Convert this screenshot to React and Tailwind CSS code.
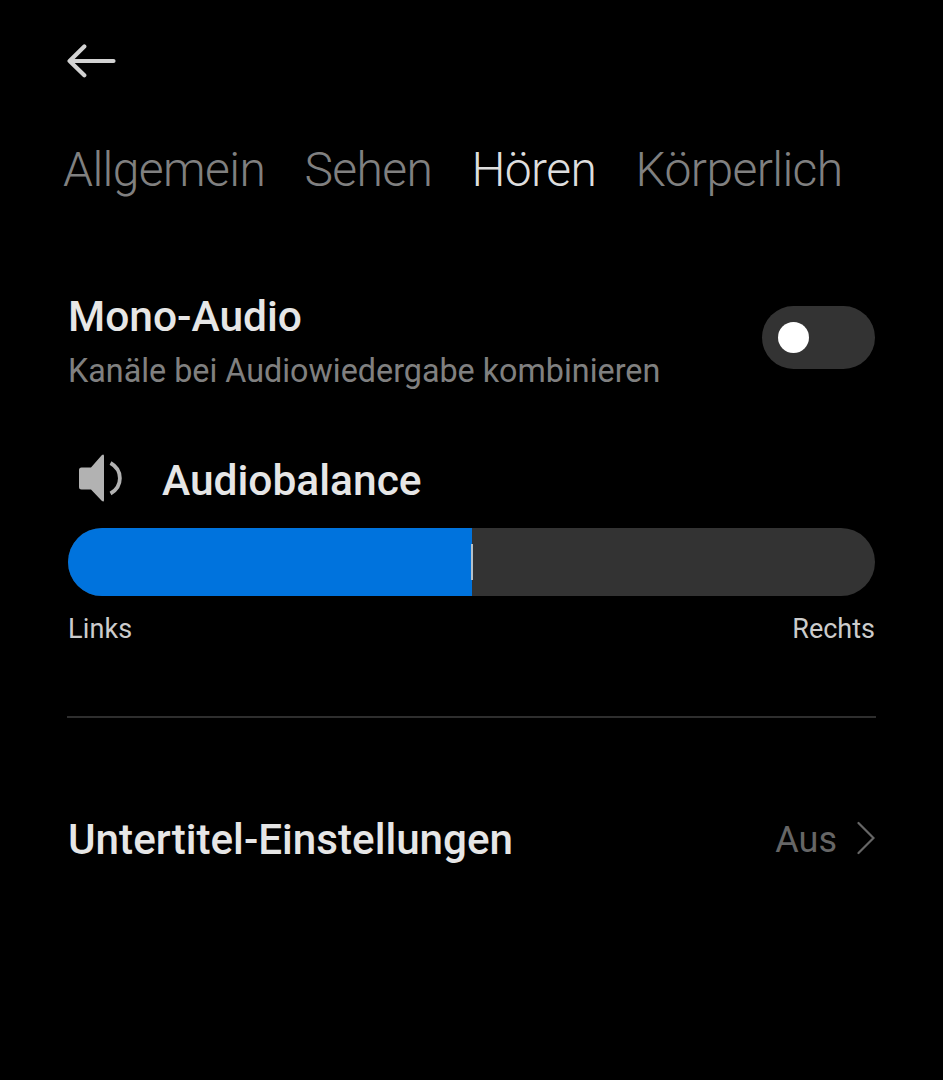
import React, { useState } from 'react';

const tabs = ['Allgemein', 'Sehen', 'Hören', 'Körperlich'];

const BackIcon = () => (
  <svg width="50" height="36" viewBox="0 0 50 36" fill="none" stroke="#d2d2d2" strokeWidth="4.2" strokeLinecap="round" strokeLinejoin="round">
    <path d="M17.3 3.5 2.6 18l14.7 14.3M2.6 18H46.5" />
  </svg>
);

const SpeakerIcon = () => (
  <svg width="44" height="50" viewBox="0 0 44 50" fill="none">
    <path d="M2.5 14.5H12L22.7 2.2q2.3-1.8 2.3.8v44q0 2.6-2.3.8L12 36.5H2.5Q0 36.5 0 34V17q0-2.5 2.5-2.5Z" fill="#b2b2b2" />
    <path d="M31.5 10c12.5 7 12.5 23.5 0 30.5" stroke="#b2b2b2" strokeWidth="3.8" />
  </svg>
);

const ChevronIcon = () => (
  <svg width="18" height="34" viewBox="0 0 18 34" fill="none" stroke="#666666" strokeWidth="2.2" strokeLinecap="round">
    <path d="M1.5 2l15 15-15 15" />
  </svg>
);

const App = () => {
  const [active, setActive] = useState('Hören');
  const [mono, setMono] = useState(false);

  return (
    <main className="h-[1080px] w-[943px] overflow-hidden bg-black px-[68px] pt-[43px] font-['Roboto',sans-serif] text-[#e6e6e6]">
      <button className="-ml-px block h-9"><BackIcon /></button>

      <nav className="-ml-[5px] mt-[63px] flex h-14 gap-[39.2px] whitespace-nowrap text-[48px] leading-[56px] font-light tracking-[-0.6px]">
        {tabs.map((tab) => (
          <button key={tab} onClick={() => setActive(tab)} className={tab === active ? 'text-[#dedede]' : 'text-[#808080]'}>
            {tab}
          </button>
        ))}
      </nav>

      <section className="mt-[92px] flex h-[106px] justify-between">
        <div className="pt-px">
          <h2 className="h-[52px] text-[42.5px] leading-[52px] font-medium">Mono-Audio</h2>
          <p className="mt-[8px] text-[32.3px] leading-[40px] text-[#808080]">Kanäle bei Audiowiedergabe kombinieren</p>
        </div>
        <button
          role="switch"
          aria-checked={mono}
          onClick={() => setMono(!mono)}
          className={`mt-4 flex h-[63px] w-[113px] items-center rounded-full px-4 ${mono ? 'justify-end bg-[#0073dd]' : 'bg-[#333333]'}`}
        >
          <span className="size-[31px] rounded-full bg-white" />
        </button>
      </section>

      <section className="mt-[56px]">
        <div className="flex h-[52px] items-center pl-[11px]">
          <SpeakerIcon />
          <h2 className="ml-[39px] pt-1.5 text-[42.5px] font-medium">Audiobalance</h2>
        </div>
        <div className="mt-[24px] flex h-[68px] items-center overflow-hidden rounded-full bg-[#333333]">
          <div className="h-full w-[404px] bg-[#0073dd]" />
          <div className="-ml-px h-[36px] w-[2px] bg-[#b5c0c8]" />
        </div>
        <div className="mt-[17px] flex h-8 justify-between text-[27px] leading-8 text-[#cccccc]">
          <span className="tracking-[0.15px]">Links</span>
          <span>Rechts</span>
        </div>
      </section>

      <hr className="-ml-px -mr-px mt-[71px] border-t-2 border-[#2e2e2e]" />

      <section className="mt-[95px] flex h-[52px] items-center justify-between">
        <h2 className="pt-0.5 text-[42.2px] font-medium">Untertitel-Einstellungen</h2>
        <div className="flex items-center gap-5 text-[36px] text-[#666666]">
          <span className="pt-px">Aus</span>
          <div className="pb-0.5"><ChevronIcon /></div>
        </div>
      </section>
    </main>
  );
};

export default App;
